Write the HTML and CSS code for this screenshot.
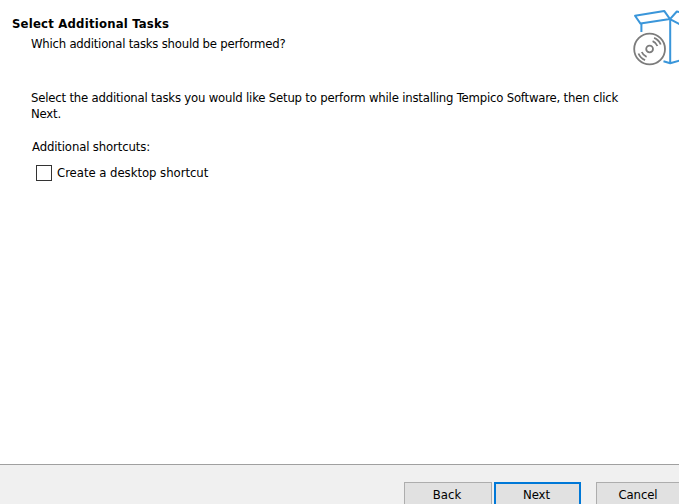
FILE: index.html
```html
<!DOCTYPE html>
<html lang="en">
<head>
<meta charset="utf-8">
<title>Setup</title>
<link rel="stylesheet" href="styles.css">
</head>
<body>
<main class="wizard">
  <header class="header">
    <div class="heading">
      <h1 class="title">Select Additional Tasks</h1>
      <p class="subtitle">Which additional tasks should be performed?</p>
    </div>
    <svg class="logo" width="51" height="68" viewBox="628 4 51 68" fill="none" stroke-linejoin="round">
      <g stroke="#3a96da" stroke-width="2">
        <path d="M635 15.7L664.2 10.9L670 19.1L640.5 23.6Z"/>
        <path d="M670 19.1L676.8 11.5L681 12.6M670 19.1L681 25M670.2 19V63M641.4 23.6V32M663.5 61.3L670.2 63.2L681 60.2"/>
      </g>
      <g stroke="#7c7c7c" stroke-width="1.8">
        <circle cx="649.6" cy="49" r="15.4"/>
        <circle cx="649.6" cy="49" r="3.4"/>
        <path d="M652.6 41.2A8.4 8.4 0 0 1 657.4 46M654.1 37.9A12 12 0 0 1 660.7 44.5M646.6 56.8A8.4 8.4 0 0 1 641.8 52M645.1 60.1A12 12 0 0 1 638.5 53.5"/>
      </g>
    </svg>
  </header>
  <section class="content">
    <p class="intro">Select the additional tasks you would like Setup to perform while installing Tempico Software, then click<br>Next.</p>
    <p class="group">Additional shortcuts:</p>
    <label class="option"><input class="check" type="checkbox"><span>Create a desktop shortcut</span></label>
  </section>
  <footer class="footer">
    <button class="btn">Back</button>
    <button class="btn primary">Next</button>
    <button class="btn cancel">Cancel</button>
  </footer>
</main>
</body>
</html>
```
FILE: styles.css
```css
* { box-sizing: border-box; }
body {
  margin: 0;
  overflow: hidden;
  background: #fff;
  color: #000;
  font: 13px/16px Tahoma, "DejaVu Sans Condensed", "Noto Sans", sans-serif;
  white-space: nowrap;
}
h1, p { margin: 0; }
.wizard { display: flex; flex-direction: column; width: 679px; height: 504px; overflow: hidden; }
.header { display: flex; justify-content: space-between; height: 90px; }
.heading { padding: 16px 0 0 12px; }
.title { font-size: 13px; line-height: 16px; font-weight: bold; letter-spacing: 0.2px; }
.subtitle { margin-top: 4px; padding-left: 19px; letter-spacing: -0.23px; }
.logo { display: block; margin-top: 4px; }
.content { flex: 1; padding-left: 31px; }
.intro { letter-spacing: -0.2px; }
.group { margin: 17px 0 0 1px; letter-spacing: -0.14px; }
.option { display: flex; align-items: center; margin: 10px 0 0 5px; letter-spacing: -0.04px; }
.check { appearance: none; width: 16px; height: 16px; margin: 0 5px 0 0; border: 1px solid #333; background: #fff; }
.footer { display: flex; height: 40px; padding: 17px 0 0 404px; border-top: 1px solid #a0a0a0; background: #f0f0f0; }
.btn {
  flex: none;
  width: 88px;
  height: 28px;
  padding: 0 2px 2px 0;
  border: 1px solid #adadad;
  background: #e1e1e1;
  color: #000;
  font: inherit;
}
.primary { width: 87px; margin-left: 2px; border: 2px solid #0078d7; }
.cancel { margin-left: 15px; padding-right: 4px; letter-spacing: -0.1px; }
```
